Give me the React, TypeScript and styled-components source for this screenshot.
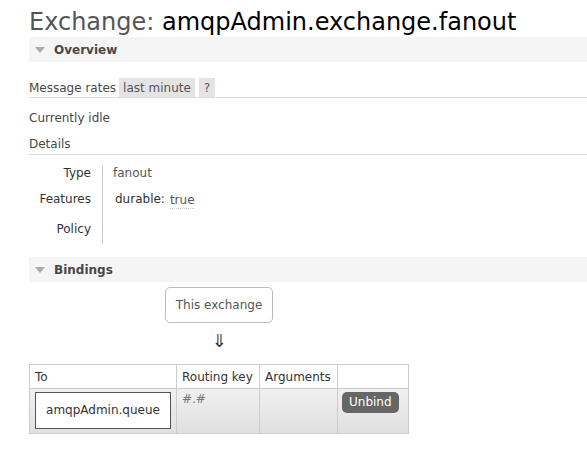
import React from "react";
import styled, { createGlobalStyle } from "styled-components";

const GlobalStyle = createGlobalStyle`
  html, body { margin: 0; padding: 0; background: #fff; }
  body {
    font-family: "DejaVu Sans", Verdana, sans-serif;
    font-size: 12px;
    color: #484848;
  }
`;

const Page = styled.div`
  padding: 0 0 20px 29px;
`;

const Title = styled.h1`
  margin: 8px 0 1px;
  font-family: "DejaVu Sans", Verdana, sans-serif;
  font-weight: 400;
  font-size: 24px;
  line-height: 28px;
  color: #555;
  white-space: nowrap;
`;

const TitleName = styled.span`
  color: #000;
`;

const SectionHeader = styled.div<{ $mt?: number }>`
  display: flex;
  align-items: center;
  gap: 9px;
  height: 25px;
  margin-top: ${(p) => p.$mt ?? 0}px;
  padding-left: 6px;
  background: #f5f5f5;
  font-weight: bold;
  color: #484848;
`;

const Triangle = styled.span`
  width: 0;
  height: 0;
  border-left: 5px solid transparent;
  border-right: 5px solid transparent;
  border-top: 6px solid #aaa;
`;

const RateRow = styled.div`
  display: flex;
  align-items: center;
  margin-top: 16px;
  height: 19px;
  border-bottom: 1px solid #ddd;
`;

const Pill = styled.span<{ $ml: number; $px: number }>`
  display: inline-flex;
  align-items: center;
  height: 19px;
  margin-left: ${(p) => p.$ml}px;
  padding: 0 ${(p) => p.$px}px;
  background: #e4e4e4;
  color: #555;
`;

const Line = styled.div<{ $mt: number; $ruled?: boolean }>`
  margin-top: ${(p) => p.$mt}px;
  line-height: 14px;
  padding-bottom: ${(p) => (p.$ruled ? 3 : 0)}px;
  border-bottom: ${(p) => (p.$ruled ? "1px solid #ddd" : "none")};
`;

const DetailsGrid = styled.div`
  display: grid;
  grid-template-columns: 73px max-content;
  grid-template-rows: 26px 30px 23px;
  margin-top: 10px;
  padding-bottom: 2px;
  line-height: 16px;
`;

const DetailLabel = styled.div`
  text-align: right;
  padding-right: 11px;
  color: #333;
`;

const DetailValue = styled.div`
  border-left: 1px solid #ccc;
  padding-left: 10px;
  color: #555;
`;

const Feature = styled.div`
  display: flex;
  align-items: flex-start;
  gap: 5px;
  padding-left: 2px;
  color: #333;
`;

const Abbr = styled.span`
  margin-top: 1px;
  color: #555;
  border-bottom: 1px dotted #ccc;
  line-height: 16px;
`;

const BindingsWrap = styled.div`
  display: inline-flex;
  flex-direction: column;
  align-items: center;
  margin-top: 5px;
`;

const ExchangeBox = styled.div`
  height: 34px;
  line-height: 34px;
  padding: 0 10px;
  border: 1px solid #bbb;
  border-radius: 5px;
  color: #555;
`;

const Arrow = styled.div`
  margin-top: 7px;
  font-family: "DejaVu Sans", sans-serif;
  font-size: 18px;
  line-height: 22px;
  color: #333;
`;

const Table = styled.table`
  margin-top: 12px;
  border-collapse: collapse;
`;

const Th = styled.th<{ $w: number }>`
  width: ${(p) => p.$w}px;
  box-sizing: border-box;
  height: 24px;
  padding: 0 5px;
  border: 1px solid #ccc;
  font-weight: normal;
  text-align: left;
  color: #333;
  background: #fff;
`;

const BodyRow = styled.tr`
  background: linear-gradient(#f0f0f0, #e0e0e0);
`;

const Td = styled.td<{ $pl?: number }>`
  height: 42px;
  box-sizing: border-box;
  padding: 3px 5px 4px ${(p) => p.$pl ?? 5}px;
  border: 1px solid #ccc;
  vertical-align: top;
  line-height: 14px;
  color: #777;
`;

const QueueBox = styled.div`
  width: 134px;
  height: 35px;
  line-height: 35px;
  text-align: center;
  background: #fff;
  border: 1px solid #555;
  color: #333;
`;

const UnbindButton = styled.span`
  display: inline-block;
  height: 21px;
  line-height: 21px;
  padding: 0 7px;
  border-radius: 5px;
  background: #666;
  color: #fff;
`;

export default function App() {
  return (
    <>
      <GlobalStyle />
      <Page>
        <Title>
          Exchange: <TitleName>amqpAdmin.exchange.fanout</TitleName>
        </Title>
        <SectionHeader>
          <Triangle />
          Overview
        </SectionHeader>
        <RateRow>
          Message rates
          <Pill $ml={3} $px={4}>last minute</Pill>
          <Pill $ml={4} $px={5}>?</Pill>
        </RateRow>
        <Line $mt={13}>Currently idle</Line>
        <Line $mt={12} $ruled>Details</Line>
        <DetailsGrid>
          <DetailLabel>Type</DetailLabel>
          <DetailValue>fanout</DetailValue>
          <DetailLabel>Features</DetailLabel>
          <DetailValue>
            <Feature>
              durable: <Abbr>true</Abbr>
            </Feature>
          </DetailValue>
          <DetailLabel>Policy</DetailLabel>
          <DetailValue />
        </DetailsGrid>
        <SectionHeader $mt={11}>
          <Triangle />
          Bindings
        </SectionHeader>
        <BindingsWrap>
          <ExchangeBox>This exchange</ExchangeBox>
          <Arrow>⇓</Arrow>
          <Table>
            <thead>
              <tr>
                <Th $w={147}>To</Th>
                <Th $w={83}>Routing key</Th>
                <Th $w={78}>Arguments</Th>
                <Th $w={71}></Th>
              </tr>
            </thead>
            <tbody>
              <BodyRow>
                <Td>
                  <QueueBox>amqpAdmin.queue</QueueBox>
                </Td>
                <Td>#.#</Td>
                <Td></Td>
                <Td $pl={4}>
                  <UnbindButton>Unbind</UnbindButton>
                </Td>
              </BodyRow>
            </tbody>
          </Table>
        </BindingsWrap>
      </Page>
    </>
  );
}
